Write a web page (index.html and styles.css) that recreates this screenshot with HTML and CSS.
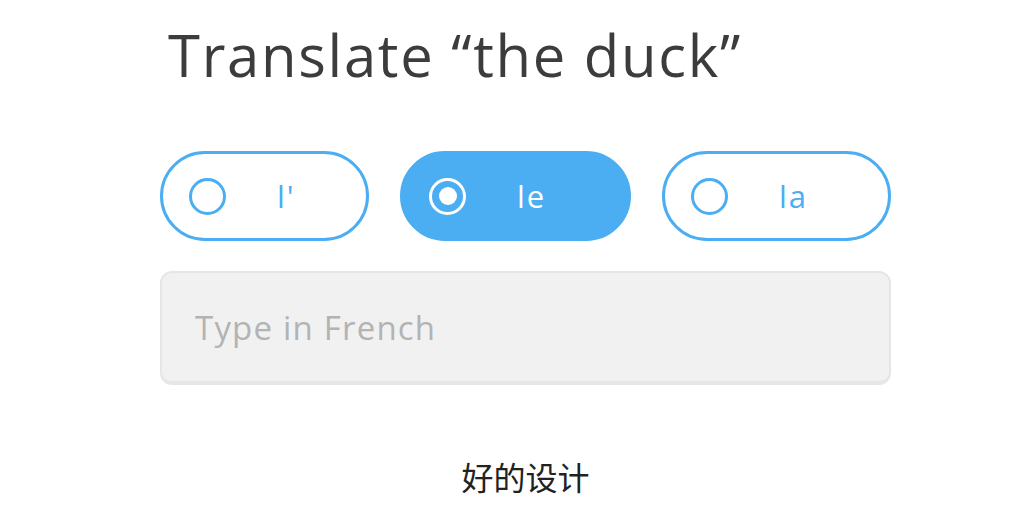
FILE: index.html
```html
<!DOCTYPE html>
<html lang="zh-CN">
<head>
<meta charset="UTF-8">
<meta name="viewport" content="width=device-width, initial-scale=1.0">
<title>Translate the duck</title>
<link rel="stylesheet" href="styles.css">
</head>
<body>
<div class="lesson">
    <h1 class="prompt">Translate “the duck”</h1>
    <div class="choices">
        <label class="choice choice-1"><span class="radio"></span><span class="word">l'</span></label>
        <label class="choice choice-2 selected"><span class="radio"></span><span class="word">le</span></label>
        <label class="choice choice-3"><span class="radio"></span><span class="word">la</span></label>
    </div>
    <div class="answer">Type in French</div>
    <p class="caption">好的设计</p>
</div>
</body>
</html>
```

FILE: styles.css
```css
body {
    margin: 0;
    background: #fff;
    font-family: "Open Sans", Lato, sans-serif;
}
.lesson {
    width: 731px;
    margin-left: 160px;
    padding-top: 19px;
}
.prompt {
    margin: 0 0 0 8px;
    font-size: 58px;
    font-weight: normal;
    letter-spacing: 1.7px;
    line-height: 72px;
    color: #3c3c3c;
}
.choices {
    display: flex;
    gap: 31px;
    margin-top: 60px;
}
.choice {
    box-sizing: border-box;
    height: 90px;
    display: flex;
    align-items: center;
    padding-left: 26px;
    border: 3px solid #4baef3;
    border-radius: 45px;
    color: #4baef3;
}
.choice-1 { width: 209px; }
.choice-2 { width: 231px; }
.choice-3 { width: 229px; }
.choice.selected {
    background: #4baef3;
    color: #fff;
}
.radio {
    box-sizing: border-box;
    width: 37px;
    height: 37px;
    border: 3px solid #4baef3;
    border-radius: 50%;
    display: flex;
    align-items: center;
    justify-content: center;
}
.selected .radio {
    border-color: #fff;
}
.selected .radio::after {
    content: "";
    width: 18px;
    height: 18px;
    border-radius: 50%;
    background: #fff;
}
.word {
    margin-left: 51px;
    font-size: 31px;
    letter-spacing: 2px;
}
.answer {
    box-sizing: border-box;
    height: 114px;
    margin-top: 30px;
    padding-left: 33px;
    display: flex;
    align-items: center;
    background: #f1f1f1;
    border: 2px solid #e6e6e6;
    border-bottom-width: 4px;
    border-radius: 12px;
    font-size: 33px;
    letter-spacing: 1.2px;
    color: #b3b3b3;
}
.caption {
    margin: 68px 0 0;
    text-align: center;
    font-family: "Noto Sans CJK SC", sans-serif;
    font-size: 32px;
    color: #222;
}
```
